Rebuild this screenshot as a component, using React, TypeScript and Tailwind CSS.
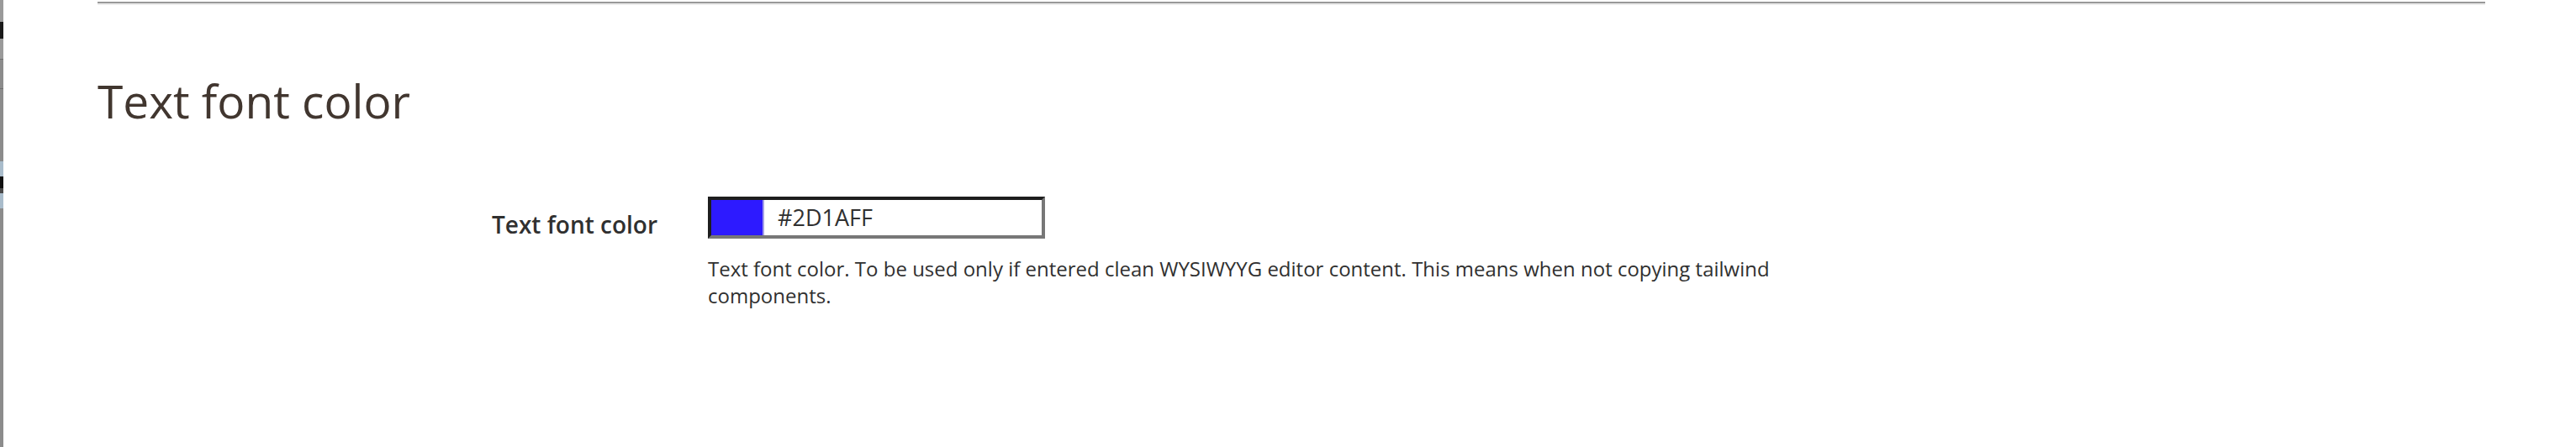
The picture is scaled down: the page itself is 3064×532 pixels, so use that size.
import React from "react";

const font = { fontFamily: '"Open Sans", "Liberation Sans", sans-serif' };

function EdgeStrip() {
  return (
    <div className="flex w-[4px] shrink-0 flex-col bg-[#8c8c8c]">
      <div className="h-[26px] bg-[#9a9a9a]" />
      <div className="h-[20px] bg-[#1a1a1a]" />
      <div className="h-[24px] bg-[#9a9a9a]" />
      <div className="h-[1px] bg-[#6f6f6f]" />
      <div className="h-[34px]" />
      <div className="h-[1px] bg-[#6f6f6f]" />
      <div className="h-[86px]" />
      <div className="h-[18px] bg-[#a9bccb]" />
      <div className="h-[14px] bg-[#111]" />
      <div className="h-[6px] bg-[#4a4a4a]" />
      <div className="h-[18px] bg-[#a9bccb]" />
      <div className="flex-1" />
    </div>
  );
}

export default function App() {
  return (
    <div className="flex min-h-[532px] w-full bg-white text-[#303030]" style={font}>
      <EdgeStrip />
      <div className="flex-1 pl-[112px] pr-[108px]">
        <div className="mt-[2px] h-[2px] bg-[#999999]" />
        <div className="h-[2px] bg-[#ececec]" />

        <h2 className="mt-[86px] text-[55px] font-normal leading-none text-[#41362f]">
          Text font color
        </h2>

        <div className="mt-[87px] flex items-start gap-[60px]">
          <label
            htmlFor="text-font-color"
            className="w-[666px] shrink-0 pt-[14px] text-right text-[28px] font-semibold leading-[38px] text-[#303030]"
          >
            Text font color
          </label>

          <div className="flex flex-col">
            <div className="flex h-[50px] w-[401px] border-4 border-t-[#1e1e1e] border-l-[#1e1e1e] border-b-[#777777] border-r-[#777777] bg-white">
              <span className="w-[63px] shrink-0 border-r-2 border-[#a39ee6] bg-[#2d1aff]" />
              <input
                id="text-font-color"
                readOnly
                value="#2D1AFF"
                className="min-w-0 flex-1 bg-transparent pl-[16px] text-[27px] text-[#303030] outline-none"
                style={font}
              />
            </div>
            <p className="mt-[20px] w-[1270px] text-[24px] leading-[32px] text-[#303030]">
              Text font color. To be used only if entered clean WYSIWYYG editor content. This means when not copying tailwind components.
            </p>
          </div>
        </div>
      </div>
    </div>
  );
}
